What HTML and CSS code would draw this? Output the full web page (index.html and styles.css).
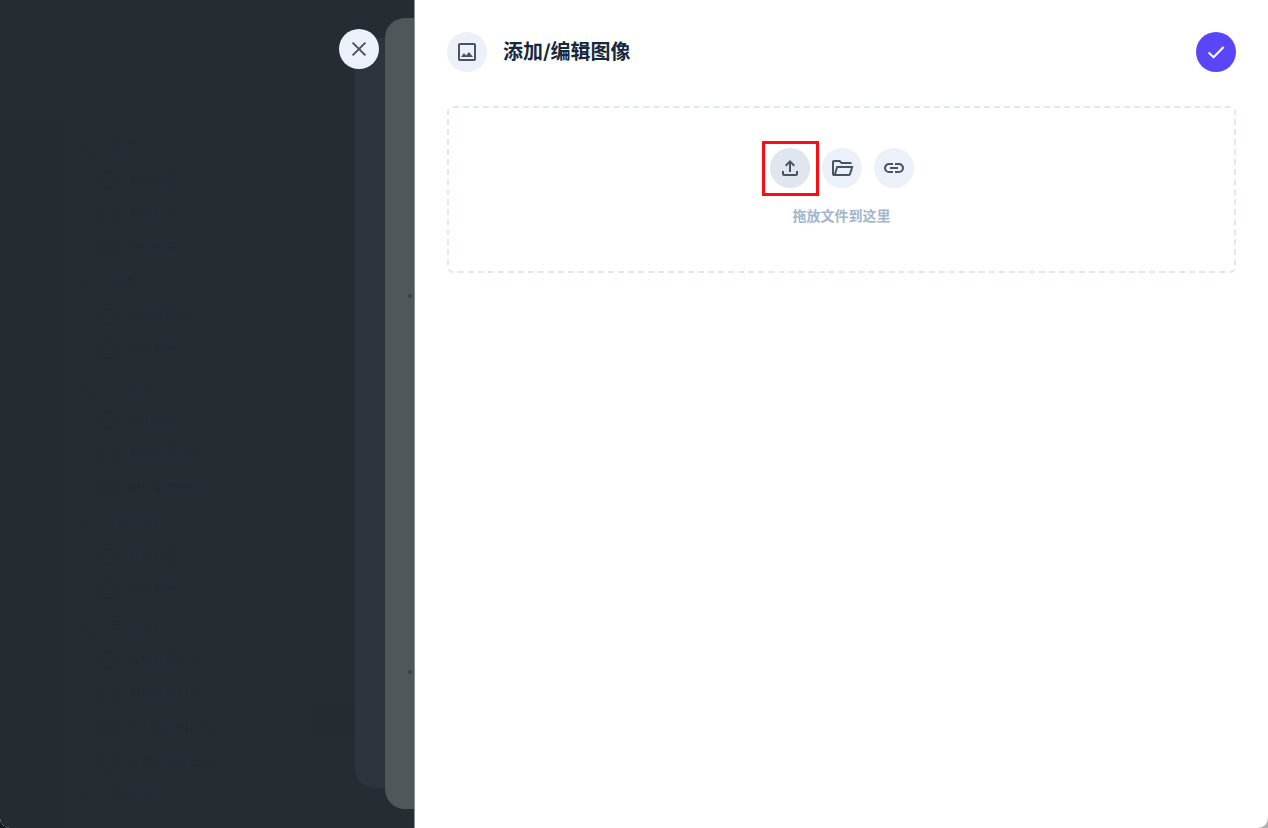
FILE: index.html
```html
<!DOCTYPE html>
<html lang="zh-CN">
<head>
    <meta charset="UTF-8">
    <meta name="viewport" content="width=device-width, initial-scale=1.0">
    <title>添加/编辑图像</title>
    <link rel="stylesheet" href="styles.css">
</head>
<body>
    <!-- dimmed app and the drawers below the active one -->
    <div class="backdrop">
        <div class="module-bar"></div>
        <nav class="menu" aria-hidden="true">
            <div class="group">
                <div class="folder">商品</div>
                <div class="entry">商品管理</div>
                <div class="entry">商品分类</div>
                <div class="entry">商品标签</div>
            </div>
            <div class="group">
                <div class="folder">系统</div>
                <div class="entry">系统管理员</div>
                <div class="entry">系统管理</div>
            </div>
            <div class="group">
                <div class="folder">API管理</div>
                <div class="entry">API列表</div>
                <div class="entry">数据配置列表</div>
                <div class="entry">每日调用统计</div>
            </div>
            <div class="group">
                <div class="folder">订单中心</div>
                <div class="entry">订单列表</div>
                <div class="entry">退款管理</div>
            </div>
            <div class="group">
                <div class="folder">支付中心</div>
                <div class="entry">支付订单记录</div>
                <div class="entry">微信支付日志</div>
                <div class="entry">支付宝支付日志</div>
                <div class="entry">支付宝退款日志</div>
            </div>
            <div class="group">
                <div class="folder">帮助中心</div>
            </div>
        </nav>
        <div class="form-edge"></div>
        <div class="layer layer-back"></div>
        <div class="layer layer-front">
            <span class="dot"></span>
            <span class="dot"></span>
        </div>
        <button class="icon-button close" type="button" aria-label="关闭">
            <svg viewBox="0 0 24 24"><path d="M5.6 5.6 18.4 18.4M18.4 5.6 5.6 18.4" fill="none" stroke="currentColor" stroke-width="2"/></svg>
        </button>
    </div>

    <main class="drawer">
        <header class="header">
            <span class="icon-button">
                <svg viewBox="0 0 24 24"><path d="M5 21q-.8 0-1.4-.6T3 19V5q0-.8.6-1.4T5 3h14q.8 0 1.4.6T21 5v14q0 .8-.6 1.4T19 21Zm0-2h14V5H5v14Zm1-2 3-4 2 2.600 3-3.600 4 5Z" fill-rule="evenodd"/></svg>
            </span>
            <h1>添加/编辑图像</h1>
            <button class="icon-button save" type="button" aria-label="完成">
                <svg viewBox="0 0 24 24"><path d="m4.600 12.400 4.900 4.900L19.600 7" fill="none" stroke="currentColor" stroke-width="2"/></svg>
            </button>
        </header>

        <section class="dropzone">
            <div class="actions">
                <div class="highlighted">
                    <button class="icon-button active" type="button" aria-label="上传">
                        <svg viewBox="0 0 24 24"><path d="M18 15v3H6v-3H4v3c0 1.100.9 2 2 2h12c1.100 0 2-.9 2-2v-3h-2zM7 9l1.410 1.410L11 7.830V16h2V7.830l2.590 2.580L17 9l-5-5-5 5z"/></svg>
                    </button>
                </div>
                <button class="icon-button" type="button" aria-label="从文件库选择">
                    <svg viewBox="0 0 24 24"><path d="M4 20q-.825 0-1.412-.587Q2 18.825 2 18V6q0-.825.588-1.412Q3.175 4 4 4h6l2 2h8q.825 0 1.413.588Q22 7.175 22 8H11.175l-2-2H4v12l2.400-8h17.100l-2.575 8.575q-.2.65-.737 1.038Q19.650 20 19 20Zm2.100-2H19l1.800-6H7.900Z"/></svg>
                </button>
                <button class="icon-button" type="button" aria-label="从链接导入">
                    <svg viewBox="0 0 24 24"><path d="M11 17H7q-2.075 0-3.537-1.463Q2 14.075 2 12t1.463-3.538Q4.925 7 7 7h4v2H7q-1.250 0-2.125.875T4 12q0 1.250.875 2.125T7 15h4Zm-3-4v-2h8v2Zm5 4v-2h4q1.250 0 2.125-.875T20 12q0-1.250-.875-2.125T17 9h-4V7h4q2.075 0 3.538 1.462Q22 9.925 22 12q0 2.075-1.462 3.537Q19.075 17 17 17Z"/></svg>
                </button>
            </div>
            <p>拖放文件到这里</p>
        </section>
    </main>
</body>
</html>
```

FILE: styles.css
```css
*,
*::before,
*::after {
    box-sizing: border-box;
}

html {
    background: linear-gradient(to right, #14191c, #b0b0b0);
}

body {
    margin: 0;
    display: flex;
    height: 100vh;
    overflow: hidden;
    border-radius: 0 0 10px 10px;
    font-family: Inter, 'Noto Sans CJK SC', sans-serif;
    background-color: #fff;
    color: #172940;
}

.backdrop {
    position: relative;
    display: flex;
    flex: 0 0 415px;
    background-color: #252d33;
    border-right: 1px solid #8b9092;
    border-bottom-left-radius: 10px;
}

.module-bar {
    width: 59px;
    margin-top: 116px;
    background-color: #242c32;
    border-bottom-left-radius: 10px;
}

.menu {
    flex: 1;
    overflow: hidden;
    padding: 129px 0 0 22px;
    font-size: 12px;
    line-height: 34px;
    color: #232b31;
}

.group {
    margin-bottom: 1px;
}

.folder,
.entry {
    display: flex;
    align-items: center;
    gap: 11px;
}

.folder::before {
    content: '';
    width: 18px;
    height: 14px;
    border: 1px solid;
    border-radius: 2px;
}

.entry {
    padding-left: 20px;
    gap: 14px;
}

.entry::before {
    content: '';
    width: 14px;
    height: 16px;
    border: 1px solid;
    border-radius: 6px;
}

.form-edge {
    align-self: flex-end;
    width: 43px;
    height: 40px;
    margin-bottom: 89px;
    border-radius: 6px 0 0 6px;
    background-color: #242b31;
}

.layer {
    width: 30px;
    border-radius: 20px 0 0 20px;
}

.layer-back {
    margin: 38px 0 40px;
    background-color: #2d343c;
}

.layer-front {
    display: flex;
    flex-direction: column;
    align-items: flex-end;
    gap: 372px;
    width: 29px;
    margin: 18px 0 19px;
    padding: 276px 2px 0 0;
    background-color: #4f575a;
}

.dot {
    width: 4px;
    height: 4px;
    border-radius: 50%;
    background-color: #39444d;
}

.icon-button {
    display: flex;
    flex-shrink: 0;
    align-items: center;
    justify-content: center;
    width: 40px;
    height: 40px;
    padding: 0;
    border: 0;
    border-radius: 50%;
    background-color: #ecf1f9;
    color: #4d5263;
}

button {
    cursor: pointer;
}

.icon-button svg {
    width: 24px;
    height: 24px;
    fill: currentColor;
}

.close {
    position: absolute;
    top: 29px;
    right: 35px;
}

.drawer {
    flex: 1;
    min-width: 0;
    padding: 32px;
}

.header {
    display: flex;
    align-items: center;
    gap: 16px;
    margin-bottom: 34px;
}

h1 {
    flex: 1;
    margin: 0;
    font-size: 20px;
    font-weight: 600;
    line-height: 32px;
}

.save {
    background-color: #5b45f8;
    color: #fff;
}

.dropzone {
    padding: 40px 32px;
    border: 2px dashed #e2e8f0;
    border-radius: 6px;
    text-align: center;
}

.actions {
    display: flex;
    justify-content: center;
    gap: 12px;
}

.active {
    background-color: #dfe6ee;
}

.highlighted {
    position: relative;
}

.highlighted::after {
    content: '';
    position: absolute;
    top: -7px;
    left: -8px;
    width: 57px;
    height: 55px;
    border: 3px solid #fb0d13;
    pointer-events: none;
}

.dropzone p {
    margin: 16px 0 3px;
    font-size: 14px;
    font-weight: 600;
    line-height: 24px;
    color: #a2b5cd;
}
```
